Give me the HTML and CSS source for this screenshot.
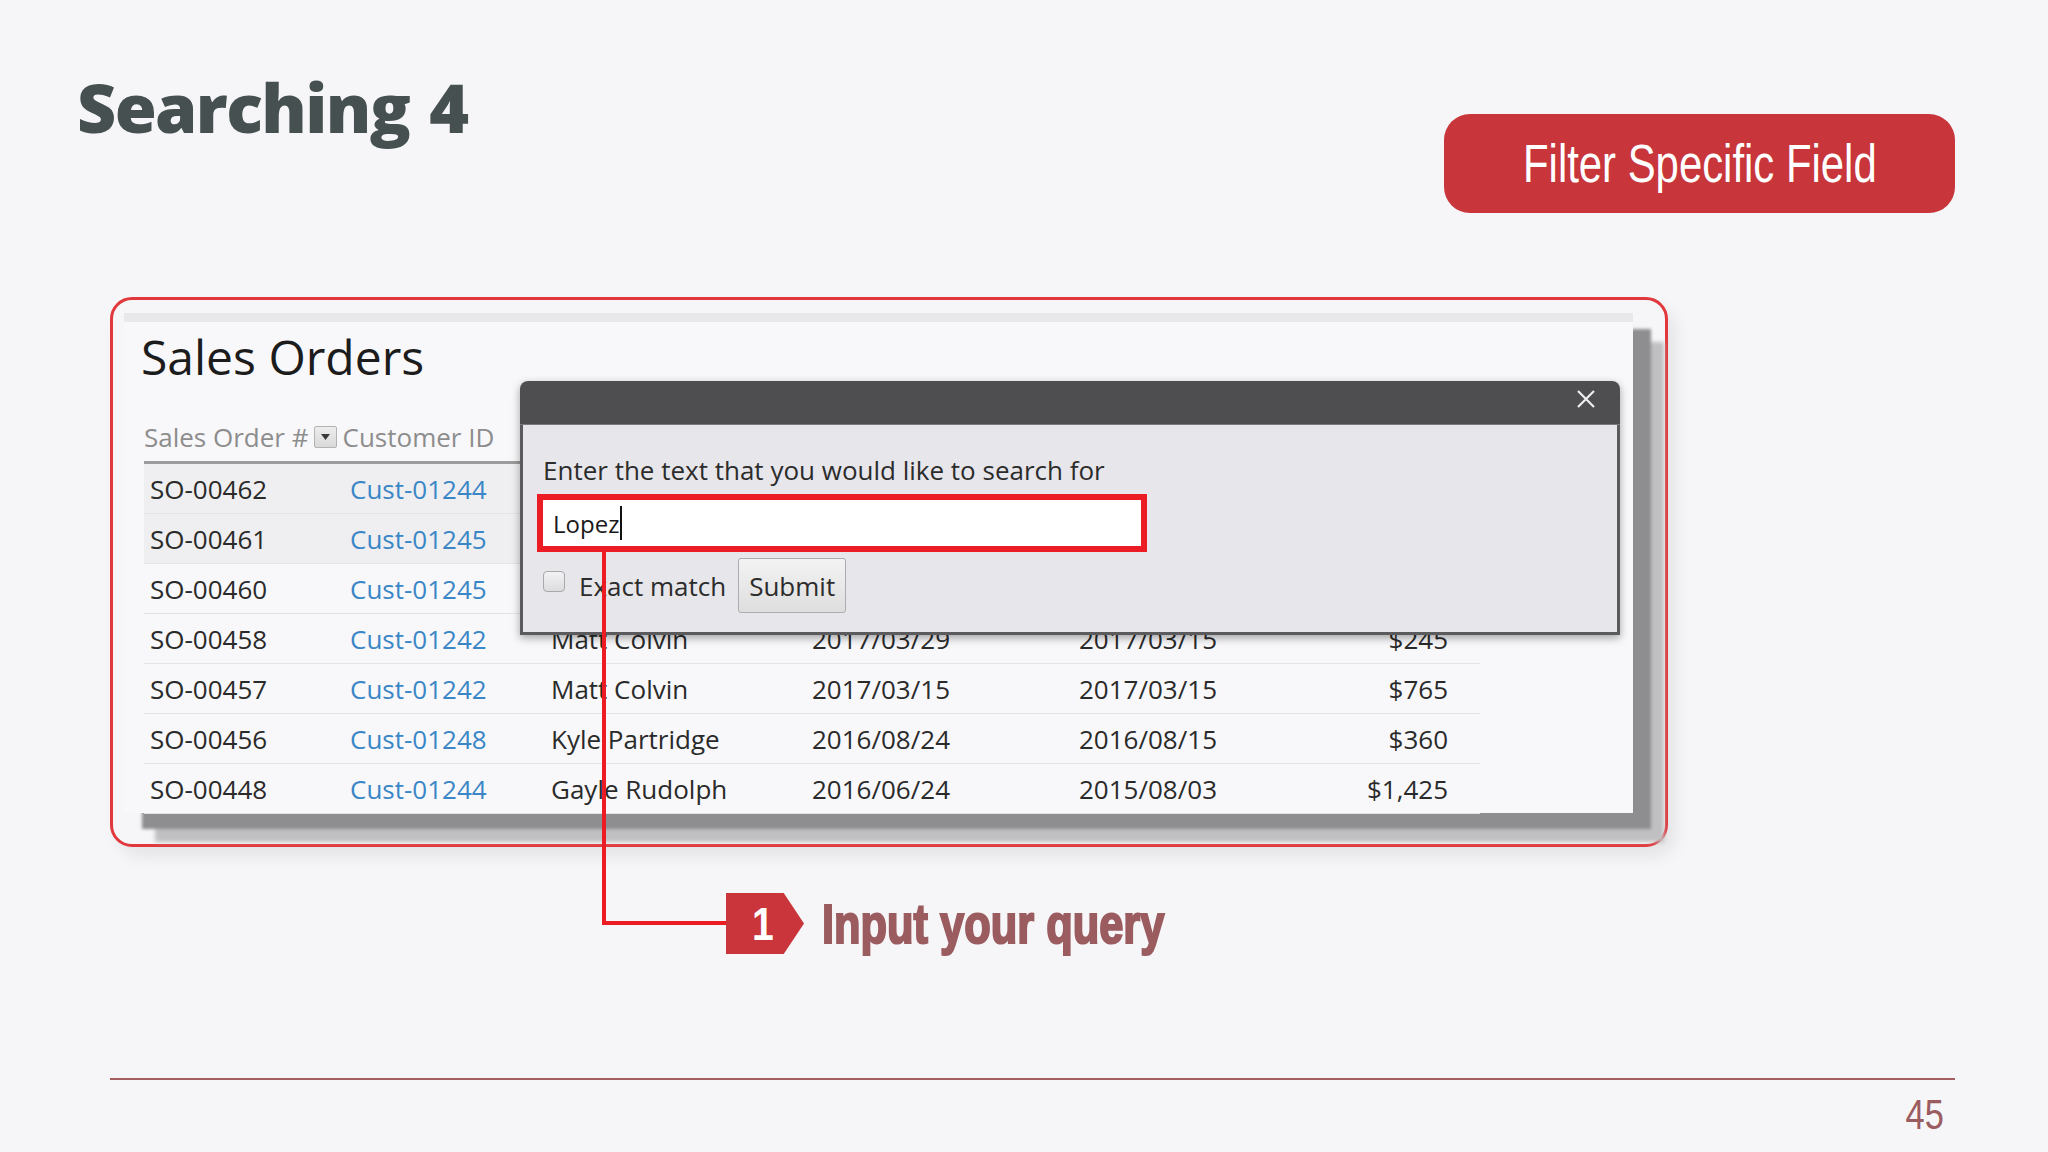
FILE: index.html
```html
<!DOCTYPE html>
<html lang="en">
<head>
<meta charset="utf-8">
<title>Searching 4</title>
<link rel="stylesheet" href="styles.css">
</head>
<body>
<div class="slide">
  <div class="top">
    <h1 class="title">Searching 4</h1>
    <div class="pill"><span class="pill-text">Filter Specific Field</span></div>
  </div>

  <div class="frame">
    <div class="shot">
      <h2 class="so-title">Sales Orders</h2>
      <div class="thead">
        <span class="th">Sales Order #</span>
        <span class="dd"><svg width="9" height="6" viewBox="0 0 9 6"><path d="M0 0 L9 0 L4.5 6 Z" fill="#3a3a3a"/></svg></span>
        <span class="th th2">Customer ID</span>
      </div>
      <div class="row hl"><span class="c">SO-00462</span><span class="c link">Cust-01244</span><span class="c"></span><span class="c"></span><span class="c"></span><span class="c amt"></span></div>
      <div class="row hl"><span class="c">SO-00461</span><span class="c link">Cust-01245</span><span class="c"></span><span class="c"></span><span class="c"></span><span class="c amt"></span></div>
      <div class="row"><span class="c">SO-00460</span><span class="c link">Cust-01245</span><span class="c"></span><span class="c"></span><span class="c"></span><span class="c amt"></span></div>
      <div class="row"><span class="c">SO-00458</span><span class="c link">Cust-01242</span><span class="c">Matt Colvin</span><span class="c">2017/03/29</span><span class="c">2017/03/15</span><span class="c amt">$245</span></div>
      <div class="row"><span class="c">SO-00457</span><span class="c link">Cust-01242</span><span class="c">Matt Colvin</span><span class="c">2017/03/15</span><span class="c">2017/03/15</span><span class="c amt">$765</span></div>
      <div class="row"><span class="c">SO-00456</span><span class="c link">Cust-01248</span><span class="c">Kyle Partridge</span><span class="c">2016/08/24</span><span class="c">2016/08/15</span><span class="c amt">$360</span></div>
      <div class="row"><span class="c">SO-00448</span><span class="c link">Cust-01244</span><span class="c">Gayle Rudolph</span><span class="c">2016/06/24</span><span class="c">2015/08/03</span><span class="c amt">$1,425</span></div>

      <div class="modal">
        <div class="modal-bar">
          <svg class="close" width="20" height="20" viewBox="0 0 20 20"><path d="M2 2 L18 18 M18 2 L2 18" stroke="#eeeeee" stroke-width="2.2" fill="none"/></svg>
        </div>
        <div class="modal-body">
          <div class="prompt">Enter the text that you would like to search for</div>
          <div class="field"><span class="val">Lopez</span><span class="caret"></span></div>
          <div class="actions">
            <span class="check"></span>
            <span class="exact">Exact match</span>
            <span class="submit">Submit</span>
          </div>
        </div>
      </div>
    </div>
  </div>

  <div class="connector"></div>

  <div class="callout">
    <div class="badge"><span class="badge-num">1</span></div>
    <span class="callout-text">Input your query</span>
  </div>

  <div class="footer-line"></div>
  <div class="page-num"><span class="num">45</span></div>
</div>
</body>
</html>
```

FILE: styles.css
```css
html, body {
  margin: 0;
  padding: 0;
}
body {
  background: #f6f6f8;
  width: 2048px;
  height: 1152px;
  overflow: hidden;
}
.slide {
  position: relative;
  width: 2048px;
  height: 1152px;
  font-family: "Open Sans", "Liberation Sans", sans-serif;
}

/* ---------- header ---------- */
.top {
  display: flex;
  justify-content: space-between;
  align-items: flex-start;
  padding: 73px 93px 0 77px;
  height: 140px;
}
.title {
  margin: 0;
  font-family: "Open Sans", sans-serif;
  font-weight: 800;
  font-size: 68px;
  line-height: 68px;
  color: #465050;
  letter-spacing: -1.6px;
  word-spacing: 4px;
}
.pill {
  margin-top: 41px;
  width: 511px;
  height: 99px;
  border-radius: 26px;
  background: #c8353a;
  display: flex;
  align-items: center;
  justify-content: center;
}
.pill-text {
  display: inline-block;
  font-family: "Liberation Sans", Arial, sans-serif;
  font-size: 53px;
  line-height: 60px;
  color: #ffffff;
  white-space: nowrap;
  transform: scaleX(0.79);
}

/* ---------- framed screenshot ---------- */
.frame {
  box-sizing: border-box;
  margin: 84px 0 0 110px;
  width: 1558px;
  height: 550px;
  border: 3px solid #e0383c;
  border-radius: 22px;
  padding: 13px 0 0 11px;
  box-shadow: 8px 10px 16px rgba(0, 0, 0, 0.07);
}
.shot {
  position: relative;
  box-sizing: border-box;
  width: 1509px;
  height: 500px;
  background: #f8f8fa;
  border-top: 9px solid #e8e8ea;
  padding-left: 20px;
  box-shadow: 18px 16px 3px #8e8e90, 31px 29px 4px #c0c0c2;
  color: #2a2a2a;
}
.so-title {
  margin: 12px 0 0 -3px;
  font-weight: 400;
  font-size: 48px;
  line-height: 46px;
  color: #1c1c1c;
}
.thead {
  margin-top: 33px;
  width: 1336px;
  height: 48px;
  border-bottom: 3px solid #9c9c9c;
  display: flex;
  align-items: center;
  font-size: 26px;
  color: #8d8d8d;
}
.th {
  line-height: 40px;
}
.dd {
  box-sizing: border-box;
  margin-left: 5px;
  width: 23px;
  height: 22px;
  border: 1px solid #b3b3b3;
  border-radius: 2px;
  background: linear-gradient(#ededed, #d9d9d9);
  display: flex;
  align-items: center;
  justify-content: center;
}
.th2 {
  margin-left: 6px;
}
.row {
  box-sizing: border-box;
  width: 1336px;
  height: 50px;
  display: grid;
  grid-template-columns: 200px 201px 261px 267px 250px 157px;
  align-items: center;
  border-bottom: 1px solid #e4e4e6;
  font-size: 26px;
  line-height: 36px;
}
.row.hl {
  background: #efeff1;
}
.c {
  padding-left: 6px;
  white-space: nowrap;
}
.link {
  color: #3a86c6;
}
.amt {
  text-align: right;
  padding-left: 0;
  padding-right: 32px;
}

/* ---------- modal ---------- */
.modal {
  position: absolute;
  left: 396px;
  top: 59px;
  width: 1100px;
  box-shadow: 0 3px 8px rgba(0, 0, 0, 0.35);
  border-radius: 8px 8px 0 0;
}
.modal-bar {
  height: 44px;
  background: #4e4e50;
  border-radius: 8px 8px 0 0;
  border-bottom: 1px solid #7a7a7c;
  box-sizing: border-box;
  display: flex;
  justify-content: flex-end;
  align-items: flex-start;
  padding: 8px 24px 0 0;
}
.modal-body {
  box-sizing: border-box;
  height: 210px;
  background: #e7e6eb;
  border: 3px solid #5b5b5d;
  border-top: none;
  padding: 27px 0 0 14px;
  font-size: 26px;
  color: #2c2c2c;
}
.prompt {
  padding-left: 6px;
  line-height: 36px;
  white-space: nowrap;
}
.field {
  box-sizing: border-box;
  margin-top: 6px;
  width: 610px;
  height: 58px;
  border: 6px solid #ec1c24;
  background: #ffffff;
  display: flex;
  align-items: center;
  padding-left: 10px;
  font-size: 24px;
  color: #1a1a1a;
}
.caret {
  width: 2px;
  height: 34px;
  background: #111111;
  margin-left: 1px;
}
.actions {
  margin-top: 6px;
  height: 55px;
  display: flex;
  align-items: center;
}
.check {
  box-sizing: border-box;
  margin: 0 0 8px 6px;
  width: 22px;
  height: 21px;
  border: 1px solid #a9a9ab;
  border-radius: 4px;
  background: linear-gradient(#f2f2f4, #dcdcde);
}
.exact {
  margin-left: 14px;
  line-height: 36px;
}
.submit {
  box-sizing: border-box;
  margin-left: 12px;
  width: 108px;
  height: 55px;
  border: 1px solid #acacac;
  border-radius: 3px;
  background: linear-gradient(#f3f3f3, #dedede);
  display: flex;
  align-items: center;
  justify-content: center;
}

/* ---------- annotation ---------- */
.connector {
  position: absolute;
  left: 602px;
  top: 550px;
  width: 125px;
  height: 371px;
  border-left: 4px solid #ec1c24;
  border-bottom: 4px solid #ec1c24;
}
.callout {
  margin: 46px 0 0 726px;
  display: flex;
  align-items: center;
  height: 61px;
}
.badge {
  width: 78px;
  height: 61px;
  background: #c9353a;
  clip-path: polygon(0 0, 74% 0, 100% 50%, 74% 100%, 0 100%);
  display: flex;
  align-items: center;
  padding-left: 24px;
  box-sizing: border-box;
}
.badge-num {
  font-family: "Liberation Sans", Arial, sans-serif;
  font-weight: 700;
  font-size: 46px;
  line-height: 46px;
  color: #ffffff;
  display: inline-block;
  transform: scaleX(0.85);
}
.callout-text {
  margin-left: 18px;
  display: inline-block;
  font-family: "Liberation Sans", Arial, sans-serif;
  font-weight: 700;
  font-size: 56px;
  line-height: 61px;
  color: #9b5c60;
  white-space: nowrap;
  transform: scaleX(0.775);
  transform-origin: left center;
  -webkit-text-stroke: 2.2px #9b5c60;
}

/* ---------- footer ---------- */
.footer-line {
  margin: 124px 93px 0 110px;
  height: 2px;
  background: #a35e60;
}
.page-num {
  margin-top: 13px;
  padding-right: 104px;
  text-align: right;
}
.num {
  display: inline-block;
  font-family: "Liberation Sans", Arial, sans-serif;
  font-size: 43px;
  line-height: 43px;
  color: #9b5c60;
  transform: scaleX(0.8);
  transform-origin: right center;
}
```
